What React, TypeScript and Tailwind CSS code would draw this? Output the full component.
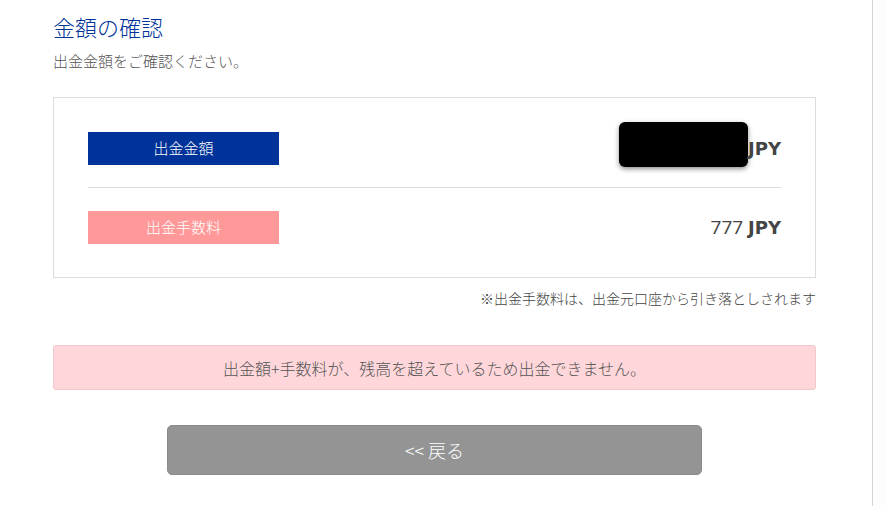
const font = { fontFamily: '"Noto Sans CJK JP", "Open Sans", sans-serif' }
const latin = { fontFamily: '"DejaVu Sans", "Noto Sans CJK JP", sans-serif' }
const digits = { fontFamily: '"Open Sans", "Noto Sans CJK JP", sans-serif' }

interface RowProps {
	label: string
	labelClass: string
	children: React.ReactNode
}

const AmountRow = ({ label, labelClass, children }: RowProps) => {
	return (
		<div className="flex h-[33px] items-center justify-between">
			<div
				className={`flex h-[33px] w-[191px] items-center justify-center text-[15px] font-light text-white ${labelClass}`}
			>
				{label}
			</div>
			<div className="flex items-center text-[18px] text-[#444]" style={latin}>
				{children}
			</div>
		</div>
	)
}

export default function App() {
	return (
		<div className="flex h-[506px] w-full bg-white font-light" style={font}>
			<main className="h-full w-[873px] shrink-0 border-r border-[#d4d4d4] pl-[53px] pr-[56px] pt-[12px]">
				<h2 className="text-[22px] leading-[28px] text-[#003399]">金額の確認</h2>
				<p className="mt-[11px] text-[15px] leading-[20px] text-[#555]">
					出金金額をご確認ください。
				</p>

				<section className="mt-[26px] border border-[#dcdcdc] px-[34px] pb-[33px] pt-[34px]">
					<AmountRow label="出金金額" labelClass="bg-[#003399]">
						<div className="mb-[8px] h-[45px] w-[129px] rounded-[6px] bg-black shadow-[0_2px_5px_rgba(0,0,0,0.45)]" />
						<span className="font-bold">JPY</span>
					</AmountRow>
					<div className="mb-[23px] mt-[22px] h-px bg-[#dddddd]" />
					<AmountRow label="出金手数料" labelClass="bg-[#ff9999]">
						<span className="text-[19px] font-normal" style={digits}>
							777&nbsp;
						</span>
						<span className="font-bold">JPY</span>
					</AmountRow>
				</section>

				<p className="mt-[10px] text-right text-[14px] leading-[20px] text-[#444]">
					※出金手数料は、出金元口座から引き落としされます
				</p>

				<div className="mt-[37px] flex h-[45px] items-center justify-center rounded-[3px] border border-[#f0c8cc] bg-[#ffd7da] text-[16px] text-[#555]">
					出金額+手数料が、残高を超えているため出金できません。
				</div>

				<div className="mt-[35px] flex justify-center">
					<button className="flex h-[50px] w-[535px] items-center justify-center rounded-[5px] border border-[#8a8a8a] bg-[#949494] text-[18px] text-white">
						&lt;&lt; 戻る
					</button>
				</div>
			</main>
			<div className="h-full flex-1 bg-[#fdfdfd]" />
		</div>
	)
}
